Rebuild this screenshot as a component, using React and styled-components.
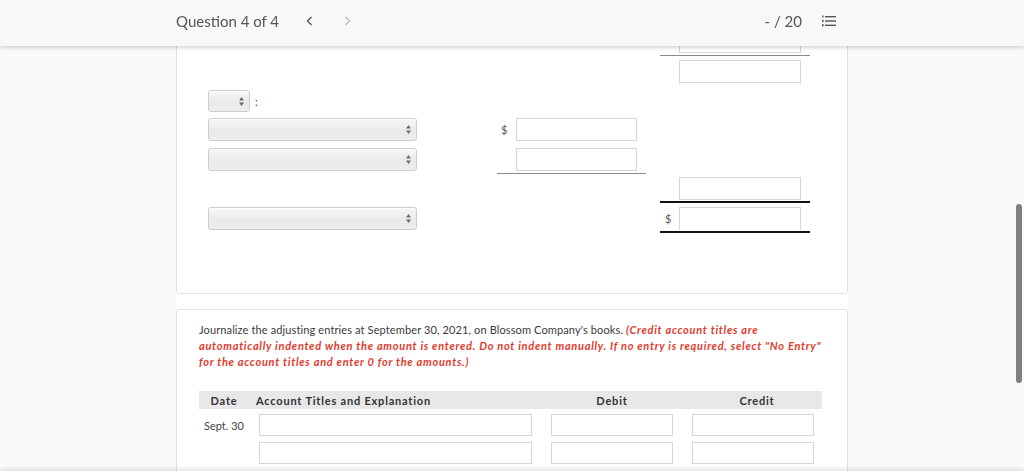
import React from "react";
import styled, { createGlobalStyle } from "styled-components";

const Global = createGlobalStyle`
  html, body { margin: 0; padding: 0; }
  body {
    background: #fafafa;
    font-family: Lato, "Open Sans", Arial, sans-serif;
    color: #333;
    overflow: hidden;
  }
`;

const Header = styled.header`
  position: fixed;
  top: 0; left: 0; right: 0;
  height: 46px;
  background: #f8f8f8;
  box-shadow: 0 2px 4px rgba(0,0,0,0.16);
  z-index: 10;
`;

const HeaderInner = styled.div`
  width: 672px;
  margin: 0 auto;
  height: 100%;
  display: flex;
  align-items: center;
  box-sizing: border-box;
  padding: 0 12px 4px 0;
  font-size: 15px;
  color: #555;
`;

const QTitle = styled.span`
  margin-right: 27px;
`;

const Chevron = styled.span`
  display: inline-flex;
  width: 8px;
  margin-right: ${p => p.$mr || 0}px;
  color: ${p => (p.$dim ? "#bbb" : "#555")};
`;

const Spacer = styled.div` flex: 1; `;

const Score = styled.span`
  margin-right: 20px;
`;

const Page = styled.main`
  width: 672px;
  margin: 0 auto;
  background: #fff;
  min-height: 100vh;
  display: flex;
  flex-direction: column;
  gap: 15px;
`;

const Card = styled.section`
  border: 1px solid #e2e2e2;
  border-radius: 3px;
  background: #fff;
  box-sizing: border-box;
  padding: ${p => p.$pad};
`;

const Row = styled.div`
  display: grid;
  grid-template-columns: 209px 80px 149px 14px 150px;
  align-items: start;
  margin-top: ${p => p.$mt || 0}px;
`;

const Cell = styled.div`
  grid-column: ${p => p.$col};
  display: flex;
  align-items: center;
  padding-bottom: ${p => p.$pb || 0}px;
  border-bottom: ${p => p.$line || "none"};
`;

const Dollar = styled.span`
  width: ${p => p.$w}px;
  flex: none;
  font-size: 11px;
  line-height: 13px;
  color: #555;
  padding-left: ${p => p.$pl}px;
  box-sizing: border-box;
`;

const Box = styled.div`
  width: ${p => p.$w}px;
  height: ${p => p.$h || 23}px;
  box-sizing: border-box;
  border: 1px solid #d6d6d6;
  border-bottom-color: ${p => (p.$noBottom ? "transparent" : "#d6d6d6")};
  background: #fff;
  flex: none;
`;

const SelectBox = styled.div`
  width: ${p => p.$w}px;
  height: ${p => p.$h}px;
  box-sizing: border-box;
  border: 1px solid #cdcdcd;
  border-radius: 3px;
  background: linear-gradient(#f7f7f7, #e9e9e9 60%, #eeeeee);
  box-shadow: inset 0 1px 0 #fff;
  display: flex;
  align-items: center;
  justify-content: flex-end;
  padding-right: 5px;
  flex: none;
`;

const Colon = styled.span`
  font-size: 11px;
  line-height: 13px;
  color: #444;
  margin-left: 5px;
`;

const Para = styled.p`
  margin: 0;
  font-size: 11px;
  line-height: 16px;
  color: #3a3a3a;
  letter-spacing: 0.12px;
`;

const Red = styled.em`
  color: #e23b2e;
  font-weight: 700;
  font-style: italic;
  letter-spacing: 0.72px;
`;

const Table = styled.div`
  margin-top: 21px;
  display: grid;
  grid-template-columns: 57px 276px 141px 141px;
  padding-right: 8px;
  width: 623px;
  box-sizing: border-box;
`;

const HeadRow = styled.div`
  grid-column: 1 / -1;
  display: grid;
  grid-template-columns: subgrid;
  background: #e8e8e8;
  height: 18px;
  align-items: center;
  margin-right: -8px;
  font-size: 11px;
  line-height: 13px;
  font-weight: 700;
  letter-spacing: 0.8px;
  color: #333;
`;

const HeadCell = styled.div`
  text-align: ${p => p.$align || "center"};
  padding-left: ${p => p.$pl || 0}px;
  padding-right: ${p => p.$pr || 0}px;
  white-space: nowrap;
`;

const BodyRow = styled.div`
  grid-column: 1 / -1;
  display: grid;
  grid-template-columns: subgrid;
  margin-top: ${p => p.$mt}px;
  align-items: center;
`;

const DateCell = styled.div`
  font-size: 11px;
  line-height: 13px;
  color: #444;
  padding-left: 5px;
`;

const InCell = styled.div`
  padding-left: ${p => p.$pl}px;
`;

const ScrollThumb = styled.div`
  position: fixed;
  right: 2px;
  top: 204px;
  width: 6px;
  height: 179px;
  border-radius: 3px;
  background: #7f7f7f;
`;

const FooterShadow = styled.div`
  position: fixed;
  left: 0; right: 0;
  bottom: -30px;
  height: 30px;
  box-shadow: 0 -2px 5px rgba(0,0,0,0.12);
  background: #f8f8f8;
`;

const Arrows = () => (
  <svg width="5" height="9" viewBox="0 0 5 9">
    <path d="M2.5 0 L5 3.5 L0 3.5 Z" fill="#6a6a6a" />
    <path d="M2.5 9 L5 5.5 L0 5.5 Z" fill="#6a6a6a" />
  </svg>
);

const Select = ({ w, h }) => (
  <SelectBox $w={w} $h={h}>
    <Arrows />
  </SelectBox>
);

const ChevronIcon = ({ dir }) => (
  <svg width="7" height="10" viewBox="0 0 7 10">
    <path
      d={dir === "left" ? "M5.5 1 L1.5 5 L5.5 9" : "M1.5 1 L5.5 5 L1.5 9"}
      fill="none"
      stroke="currentColor"
      strokeWidth="1.3"
    />
  </svg>
);

const ListIcon = () => (
  <svg width="14" height="12" viewBox="0 0 14 12">
    <rect x="0" y="0.5" width="1.6" height="2" fill="#666" />
    <rect x="0" y="4.7" width="1.6" height="2.4" fill="#666" />
    <rect x="0" y="9" width="1.6" height="2.4" fill="#666" />
    <rect x="3" y="1" width="11" height="1.4" fill="#555" />
    <rect x="3" y="5.3" width="11" height="1.4" fill="#555" />
    <rect x="3" y="9.6" width="11" height="1.4" fill="#555" />
  </svg>
);

const grayLine = "1px solid #8a8a8a";
const blackLine = "2px solid #111";

export default function App() {
  return (
    <>
      <Global />
      <Header>
        <HeaderInner>
          <QTitle>Question 4 of 4</QTitle>
          <Chevron $mr={30}><ChevronIcon dir="left" /></Chevron>
          <Chevron $dim><ChevronIcon dir="right" /></Chevron>
          <Spacer />
          <Score>- / 20</Score>
          <ListIcon />
        </HeaderInner>
      </Header>

      <Page>
        <Card $pad="29px 0 60px 31px">
          <Row>
            <Cell $col="5" $pb={2} $line={grayLine}>
              <Dollar $w={19} $pl={5} />
              <Box $w={122} />
            </Cell>
          </Row>
          <Row $mt={4}>
            <Cell $col="5">
              <Dollar $w={19} $pl={5} />
              <Box $w={122} />
            </Cell>
          </Row>
          <Row $mt={7}>
            <Cell $col="1">
              <Select w={42} h={22} />
              <Colon>:</Colon>
            </Cell>
          </Row>
          <Row $mt={6}>
            <Cell $col="1"><Select w={209} h={23} /></Cell>
            <Cell $col="3">
              <Dollar $w={19} $pl={4}>$</Dollar>
              <Box $w={121} />
            </Cell>
          </Row>
          <Row $mt={7}>
            <Cell $col="1"><Select w={209} h={23} /></Cell>
            <Cell $col="3" $pb={2} $line={grayLine}>
              <Dollar $w={19} $pl={4} />
              <Box $w={121} />
            </Cell>
          </Row>
          <Row $mt={3}>
            <Cell $col="5" $pb={1} $line={blackLine}>
              <Dollar $w={19} $pl={5} />
              <Box $w={122} />
            </Cell>
          </Row>
          <Row $mt={4}>
            <Cell $col="1"><Select w={209} h={23} /></Cell>
            <Cell $col="5" $pb={1} $line={blackLine}>
              <Dollar $w={19} $pl={5}>$</Dollar>
              <Box $w={122} $noBottom />
            </Cell>
          </Row>
        </Card>

        <Card $pad="12px 22px 20px 22px">
          <Para>
            Journalize the adjusting entries at September 30, 2021, on Blossom Company's books.{" "}
            <Red>
              (Credit account titles are automatically indented when the amount is entered. Do not indent
              manually. If no entry is required, select "No Entry" for the account titles and enter 0 for the
              amounts.)
            </Red>
          </Para>
          <Table>
            <HeadRow>
              <HeadCell $pr={7}>Date</HeadCell>
              <HeadCell $align="left">Account Titles and Explanation</HeadCell>
              <HeadCell $pl={19}>Debit</HeadCell>
              <HeadCell $pl={19}>Credit</HeadCell>
            </HeadRow>
            <BodyRow $mt={5}>
              <DateCell>Sept. 30</DateCell>
              <InCell $pl={3}><Box $w={273} $h={22} /></InCell>
              <InCell $pl={19}><Box $w={122} $h={22} /></InCell>
              <InCell $pl={19}><Box $w={122} $h={22} /></InCell>
            </BodyRow>
            <BodyRow $mt={6}>
              <DateCell />
              <InCell $pl={3}><Box $w={273} $h={22} /></InCell>
              <InCell $pl={19}><Box $w={122} $h={22} /></InCell>
              <InCell $pl={19}><Box $w={122} $h={22} /></InCell>
            </BodyRow>
          </Table>
        </Card>
      </Page>

      <ScrollThumb />
      <FooterShadow />
    </>
  );
}
